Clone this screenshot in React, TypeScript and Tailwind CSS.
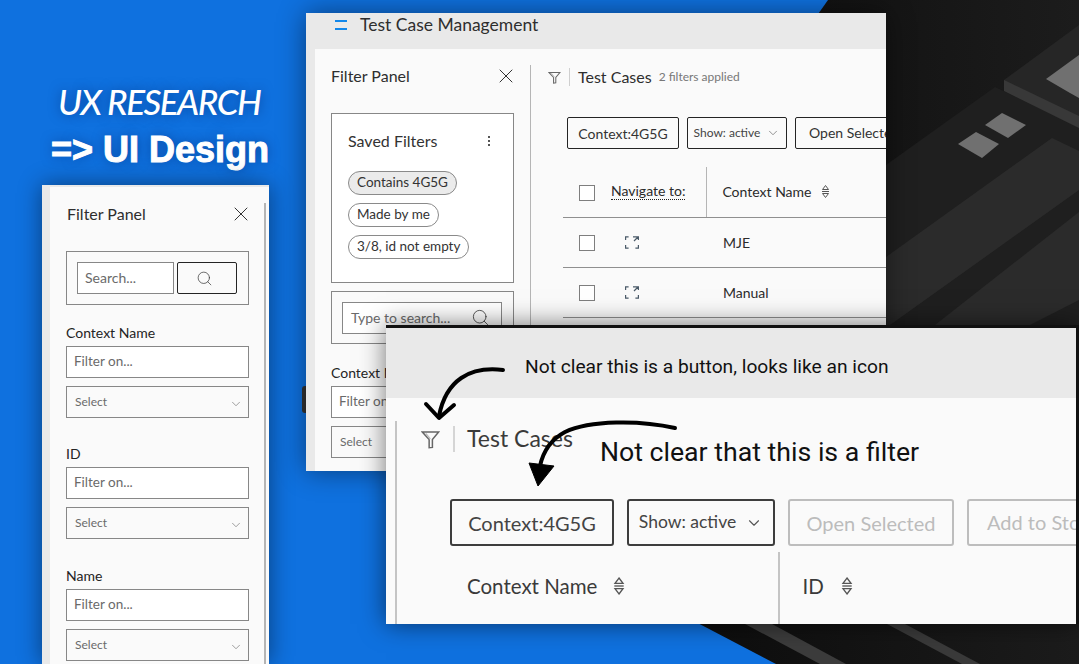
import { ChevronDown, Search, X } from "lucide-react";

const FunnelIcon = ({ size = 13 }: { size?: number }) => (
  <svg width={size} height={size} viewBox="0 0 14 14" fill="none" stroke="#666" strokeWidth="1.1">
    <path d="M1 1.5h12L8.4 7v5.8L6 13V7z" />
    <path d="M3.5 2.5 6.8 6.6" stroke="#bbb" />
  </svg>
);

const SortIcon = ({ big = false }: { big?: boolean }) => (
  <svg width={big ? 12 : 9} height={big ? 20 : 15} viewBox="0 0 9 15" fill="none" stroke="#555" strokeWidth="1">
    <path d="M4.5 1.5 7.5 5.5h-6z" />
    <path d="M4.5 13.5 7.5 9.5h-6z" />
    <path d="M1 7.5h7" />
  </svg>
);

const ExpandIcon = () => (
  <svg width="14" height="13" viewBox="0 0 14 13" fill="none" stroke="#4a5a68" strokeWidth="1.2">
    <path d="M.6 4V.8h3M.6 9v3.2h3M13.4 9v3.2h-3M8 .8h5.4V4M13 1 9 5" />
  </svg>
);

const Field = ({ label, labelClass = "" }: { label: string; labelClass?: string }) => (
  <div className={"flex flex-col " + labelClass}>
    <span className="text-[14px] leading-[18px] text-[#242424]">{label}</span>
    <div className="mt-[4px] h-[32px] border border-[#878787] bg-white pl-[7px] text-[13.5px] leading-[29px] text-[#6a6a6a]">
      Filter on...
    </div>
    <div className="mt-[8px] flex h-[32px] items-center justify-between border border-[#878787] pl-[8px] pr-[5px] text-[12px] text-[#6a6a6a]">
      Select
      <ChevronDown size={14} strokeWidth={1.2} className="mt-[3px] text-[#777]" />
    </div>
  </div>
);

const Chip = ({ text, active = false }: { text: string; active?: boolean }) => (
  <span
    className={
      "h-[24px] w-fit rounded-full border border-[#8a8a8a] px-[8px] text-[13.5px] leading-[21px] text-[#333] " +
      (active ? "bg-[#ebebeb]" : "bg-white")
    }
  >
    {text}
  </span>
);

const Check = () => <span className="block h-[16px] w-[16px] border border-[#7e7e7e] bg-white" />;

const TableRow = ({ name }: { name: string }) => (
  <div className="flex h-[50px] items-center border-b border-[#8f8f8f] pl-[16px] text-[14px] text-[#2b2b2b]">
    <Check />
    <span className="ml-[30px] w-[98px]">
      <ExpandIcon />
    </span>
    <span className="-mt-[1px]">{name}</span>
  </div>
);

function Background() {
  return (
    <svg className="absolute inset-0" width="1079" height="664" viewBox="0 0 1079 664">
      <defs>
        <linearGradient id="dark" x1="0" y1="0" x2="1" y2="0">
          <stop offset="0" stopColor="#080808" />
          <stop offset="1" stopColor="#1c1c1c" />
        </linearGradient>
      </defs>
      <rect width="1079" height="664" fill="#0f71df" />
      <path d="M828 0H1079V664H776L690 619 560 380z" fill="url(#dark)" />
      <path d="M995 87 1079 127V330H886V165z" fill="#1f1f1f" />
      <path d="M1004 80 1079 25V122L1004 87z" fill="#262626" />
      <path d="M1004 80 1079 116V128L1004 91z" fill="#383838" />
      <path d="M1046 79 1079 55V98L1070 93z" fill="#707070" />
      <path d="M985 125 1002 113 1026 125 1008 138z" fill="#707070" />
      <path d="M958 144 976 132 999 144 982 158z" fill="#707070" />
      <path d="M1052 138 1079 151V190L890 325H886V257z" fill="#2b2b2b" />
      <path d="M1079 212V300L1030 325H935z" fill="#2b2b2b" />
      <path d="M745 624H772L846 664H820z" fill="#3c3c3c" />
      <path d="M887 624H905L980 664H962z" fill="#3a3a3a" />
    </svg>
  );
}

function LeftPanel() {
  return (
    <div className="absolute left-[42px] top-[185px] flex h-[479px] w-[227px] bg-[#e9e9e9] pt-[2px] pl-[8px] shadow-[0_0_22px_rgba(0,0,0,0.45)]">
      <div className="relative flex-1 bg-[#fafafa] px-[16px]">
        <div className="flex h-[54px] items-center justify-between pl-[1px] text-[16px] text-[#2e2e2e]">
          Filter Panel
          <X size={24} strokeWidth={1} className="text-[#333]" />
        </div>
        <div className="mt-[10px] flex h-[54px] w-[183px] items-center gap-[3px] border border-[#878787] px-[10px]">
          <div className="h-[32px] w-[97px] border border-[#878787] bg-white pl-[7px] text-[14px] leading-[29px] text-[#6a6a6a]">
            Search...
          </div>
          <div className="flex h-[32px] w-[60px] items-center justify-center rounded-[2px] border border-[#242424] pr-[5px]">
            <Search size={17} strokeWidth={1} className="text-[#333]" />
          </div>
        </div>
        <div className="flex w-[183px] flex-col">
          <Field label="Context Name" labelClass="mt-[19px]" />
          <Field label="ID" labelClass="mt-[27px]" />
          <Field label="Name" labelClass="mt-[28px]" />
        </div>
        <span className="absolute right-[3px] top-[16px] bottom-0 w-[2px] bg-[#b5b5b5]" />
      </div>
    </div>
  );
}

function MiddleWindow() {
  return (
    <div className="absolute left-[306px] top-[13px] flex h-[458px] w-[580px] flex-col bg-[#e9e9e9] shadow-[0_0_26px_rgba(0,0,0,0.45)]">
      <div className="flex h-[36px] shrink-0 items-center pb-[12px] pl-[29px]">
        <span className="flex h-[10px] w-[12px] flex-col justify-between">
          <span className="h-[2px] bg-[#1287ea]" />
          <span className="h-[2px] bg-[#1287ea]" />
        </span>
        <span className="ml-[13px] text-[17.5px] text-[#2e2e2e]">Test Case Management</span>
      </div>
      <div className="ml-[9px] flex min-h-0 flex-1 overflow-hidden bg-[#fafafa]">
        <div className="mt-[16px] w-[216px] shrink-0 border-r border-[#b5b5b5] px-[16px]">
          <div className="flex h-[22px] w-[183px] items-center justify-between text-[16px] text-[#2e2e2e]">
            Filter Panel
            <X size={24} strokeWidth={1} className="-mr-[4px] text-[#333]" />
          </div>
          <div className="mt-[26px] flex h-[170px] w-[183px] flex-col border border-[#878787] bg-white px-[16px] pt-[17px]">
            <div className="flex items-center justify-between pr-[7px] text-[16px] leading-[20px] text-[#333]">
              Saved Filters
              <span className="flex flex-col gap-[2px]">
                <i className="h-[2px] w-[2px] bg-[#555]" />
                <i className="h-[2px] w-[2px] bg-[#555]" />
                <i className="h-[2px] w-[2px] bg-[#555]" />
              </span>
            </div>
            <div className="mt-[20px] flex flex-col gap-[8px]">
              <Chip text="Contains 4G5G" active />
              <Chip text="Made by me" />
              <Chip text="3/8, id not empty" />
            </div>
          </div>
          <div className="mt-[8px] flex h-[53px] w-[183px] items-center border border-[#878787] pl-[10px]">
            <div className="flex h-[32px] w-[160px] items-center justify-between border border-[#878787] bg-white pl-[8px] pr-[11px] text-[14px] text-[#6a6a6a]">
              Type to search...
              <Search size={19} strokeWidth={1} className="text-[#333]" />
            </div>
          </div>
          <div className="w-[183px]">
            <Field label="Context Name" labelClass="mt-[20px]" />
          </div>
        </div>
        <div className="min-w-0 flex-1 pt-[16px]">
          <div className="flex h-[24px] items-center pl-[17px]">
            <FunnelIcon />
            <span className="ml-[8px] h-[18px] w-px bg-[#cfcfcf]" />
            <span className="ml-[8px] -mt-[1px] text-[16px] leading-[20px] text-[#2e2e2e]">Test Cases</span>
            <span className="ml-[7px] text-[12px] text-[#777]">2 filters applied</span>
          </div>
          <div className="mt-[28px] flex gap-[8px] pl-[36px]">
            <div className="flex h-[32px] w-[112px] shrink-0 items-center justify-center rounded-[2px] border border-[#242424] text-[14px] text-[#333]">
              Context:4G5G
            </div>
            <div className="flex h-[32px] w-[100px] shrink-0 items-center justify-center gap-[6px] rounded-[2px] border border-[#242424] text-[12px] text-[#444]">
              Show: active
              <ChevronDown size={14} strokeWidth={1.2} className="text-[#666]" />
            </div>
            <div className="h-[32px] w-[120px] shrink-0 rounded-[2px] border border-[#242424] pl-[13px] text-[14px] leading-[30px] text-[#333]">
              Open Selected
            </div>
          </div>
          <div className="ml-[32px] mt-[18px]">
            <div className="flex h-[51px] items-center border-b border-[#8f8f8f] pl-[16px] text-[14px] text-[#2b2b2b]">
              <span className="mt-[1px]">
                <Check />
              </span>
              <span className="ml-[16px] -mt-[1px] border-b border-dotted border-[#222] leading-[16px]">Navigate to:</span>
              <span className="ml-[21px] h-[50px] w-px bg-[#b5b5b5]" />
              <span className="ml-[15px] -mt-[1px]">Context Name</span>
              <span className="ml-[10px] -mt-[1px] flex">
                <SortIcon />
              </span>
            </div>
            <TableRow name="MJE" />
            <TableRow name="Manual" />
          </div>
        </div>
      </div>
    </div>
  );
}

function ZoomWindow() {
  return (
    <div className="absolute left-[386px] top-[325px] flex h-[299px] w-[693px] flex-col border-t-[3px] border-r-[3px] border-[#111] bg-[#fafafa] shadow-[0_0_24px_rgba(0,0,0,0.55)]">
      <div className="flex h-[70px] shrink-0 bg-[#e9e9e9] pl-[139px] pt-[27px] font-['Roboto',sans-serif] text-[19.2px] leading-[24px] text-[#111]">
        Not clear this is a button, looks like an icon
      </div>
      <div className="ml-[9px] flex min-h-0 flex-1 flex-col overflow-hidden">
        <div className="mt-[23px] flex-1 border-l-2 border-[#c4c4c4]">
          <div className="flex h-[36px] items-center pl-[24px]">
            <FunnelIcon size={19} />
            <span className="ml-[13px] h-[26px] w-[2px] bg-[#d5d5d5]" />
            <span className="ml-[12px] -mt-[2px] text-[23px] text-[#3a3a3a]">Test Cases</span>
            <span className="ml-[27px] mt-[26px] font-['Roboto',sans-serif] text-[26.7px] text-[#111]">
              Not clear that this is a filter
            </span>
          </div>
          <div className="mt-[42px] flex gap-[13px] pl-[53px]">
            <div className="flex h-[47px] w-[164px] shrink-0 items-center justify-center rounded-[3px] border-2 border-[#3d3d3d] text-[20px] text-[#444]">
              Context:4G5G
            </div>
            <div className="flex h-[47px] w-[148px] shrink-0 items-center justify-center gap-[9px] rounded-[3px] border-2 border-[#3d3d3d] text-[17.5px] text-[#444]">
              Show: active
              <ChevronDown size={18} strokeWidth={1.5} className="text-[#555]" />
            </div>
            <div className="flex h-[47px] w-[166px] shrink-0 items-center justify-center rounded-[3px] border-2 border-[#bdbdbd] text-[20px] text-[#bcbcbc]">
              Open Selected
            </div>
            <div className="h-[47px] w-[160px] shrink-0 rounded-[3px] border-2 border-[#bdbdbd] pl-[18px] text-[20px] leading-[43px] text-[#bcbcbc]">
              Add to Store
            </div>
          </div>
          <div className="mt-[6px] flex h-[72px] items-center pl-[70px] text-[20.5px] text-[#3a3a3a]">
            <span className="-mt-[4px]">Context Name</span>
            <span className="-mt-[4px] ml-[16px] flex">
              <SortIcon big />
            </span>
            <span className="ml-[153px] h-[72px] w-[2px] bg-[#c4c4c4]" />
            <span className="-mt-[4px] ml-[22px]">ID</span>
            <span className="-mt-[4px] ml-[17px] flex">
              <SortIcon big />
            </span>
          </div>
        </div>
      </div>
    </div>
  );
}

function Arrows() {
  return (
    <svg className="absolute inset-0 pointer-events-none" width="1079" height="664" viewBox="0 0 1079 664" fill="none">
      <path d="M503 370C470 366 446 380 439 416" stroke="#000" strokeWidth="4" strokeLinecap="round" />
      <path d="M426 404 439 418 454 405" stroke="#000" strokeWidth="4" strokeLinecap="round" strokeLinejoin="round" />
      <path d="M675 428C640 420 590 420 565 432 550 440 543 452 540 466" stroke="#000" strokeWidth="4" strokeLinecap="round" />
      <path d="M529 463 554 466 538 486z" fill="#000" stroke="#000" />
    </svg>
  );
}

export default function App() {
  return (
    <div className="relative h-[664px] w-[1079px] overflow-hidden font-['Lato',sans-serif]">
      <Background />
      <div className="absolute left-[302px] top-[386px] h-[27px] w-[8px] rounded-[3px] bg-[#333]" />
      <h1 className="absolute left-[58px] top-[79px] text-[35px] font-medium italic leading-[44px] tracking-[-1.5px] text-white [text-shadow:0_0_12px_rgba(0,40,110,0.6)]">
        UX RESEARCH
      </h1>
      <h2 className="absolute left-[51px] top-[128px] font-['Liberation_Sans',sans-serif] text-[36px] font-bold leading-[44px] text-white [-webkit-text-stroke:1px_white] [text-shadow:0_0_12px_rgba(0,40,110,0.6)]">
        =&gt; UI Design
      </h2>
      <LeftPanel />
      <MiddleWindow />
      <ZoomWindow />
      <Arrows />
    </div>
  );
}
